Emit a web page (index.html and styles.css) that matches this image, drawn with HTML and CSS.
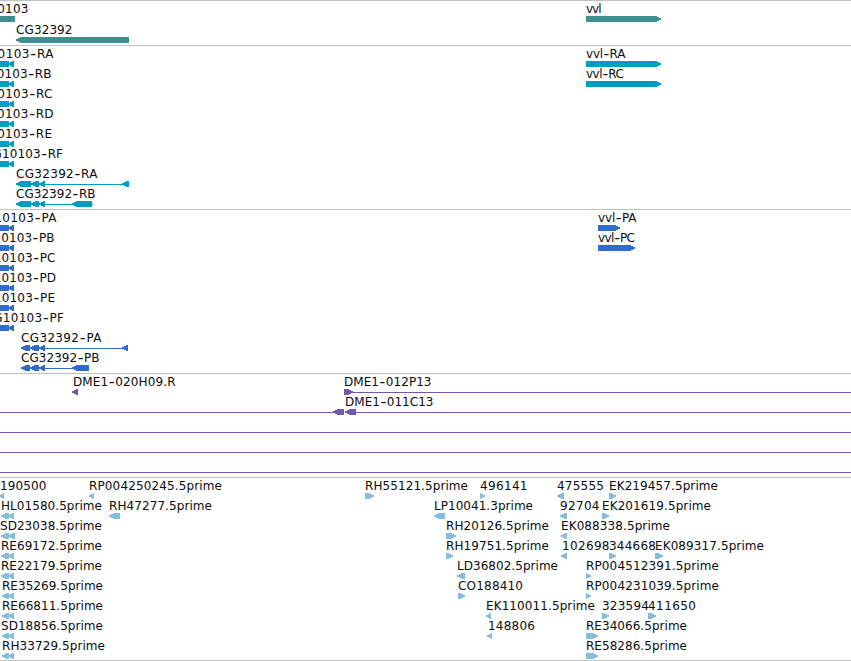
FILE: index.html
```html
<!DOCTYPE html>
<html lang="en">
<head>
<meta charset="utf-8">
<title>Genome tracks</title>
<link rel="stylesheet" href="styles.css">
</head>
<body>
<main class="browser">
  <section class="track genes" id="genes"></section>
  <section class="track transcripts" id="transcripts"></section>
  <section class="track proteins" id="proteins"></section>
  <section class="track clones" id="clones"></section>
  <section class="track ests" id="ests"></section>
</main>
<script src="tracks.js"></script>
</body>
</html>
```
FILE: styles.css
```css
body {
  margin: 0;
  background: #fff;
  overflow: hidden;
}
.browser {
  display: flex;
  flex-direction: column;
  width: 851px;
  height: 661px;
  box-sizing: border-box;
  border-bottom: 1px solid #c0c0c0;
}
.track {
  display: flex;
  flex-direction: column;
  border-top: 1px solid #c0c0c0;
  padding-bottom: 3px;
}
.genes { padding-bottom: 2px; fill: #3e8e94; }
.transcripts { fill: #009dc1; }
.proteins { fill: #316ccc; }
.clones { fill: #7458aa; }
.ests { padding-bottom: 0; fill: #86bddd; }
.row {
  display: block;
  flex: none;
  width: 851px;
  height: 20px;
  overflow: visible;
}
.genes .row { height: 21px; }
.shape { shape-rendering: crispEdges; }
.label {
  font-family: "DejaVu Sans", sans-serif;
  font-size: 12px;
  fill: #0c0c0c;
}
.dash { font-size: 16px; }
```
FILE: tracks.js
```javascript
// Labels: [text, left, right]. Glyphs: [start, end, direction], 0 = plain bar.
// Lines: [start, end].
const near = [[0, 9, 0], [8, 14, -1]];
const tracks = {
  genes: [
    { labels: [['CG10103', -28, 28], ['vvl', 586, 601]], glyphs: [[0, 15, 0], [586, 661, 1]] },
    { labels: [['CG32392', 17, 72]], glyphs: [[16, 129, -1]] }
  ],
  transcripts: [
    { labels: [['CG10103-RA', -28, 53], ['vvl-RA', 586, 625]], glyphs: [...near, [586, 661, 1]] },
    { labels: [['CG10103-RB', -28, 51], ['vvl-RC', 586, 623.5]], glyphs: [...near, [586, 661, 1]] },
    { labels: [['CG10103-RC', -28, 52]], glyphs: near },
    { labels: [['CG10103-RD', -28, 53]], glyphs: near },
    { labels: [['CG10103-RE', -28, 51.5]], glyphs: near },
    { labels: [['CG10103-RF', -15, 62.5]], glyphs: near },
    { labels: [['CG32392-RA', 17, 97]], glyphs: [[16, 31, -1], [31, 39, -1], [39, 45, -1], [122, 129, -1]], lines: [[39, 129]] },
    { labels: [['CG32392-RB', 17, 95]], glyphs: [[16, 31, -1], [31, 39, -1], [39, 45, -1], [72, 92, -1]], lines: [[39, 93]] }
  ],
  proteins: [
    { labels: [['CG10103-PA', -23.3, 56], ['vvl-PA', 598, 636]], glyphs: [...near, [598, 620, 1]] },
    { labels: [['CG10103-PB', -23.3, 54], ['vvl-PC', 598, 634.5]], glyphs: [...near, [598, 635, 1]] },
    { labels: [['CG10103-PC', -23.3, 55]], glyphs: near },
    { labels: [['CG10103-PD', -23.3, 55.5]], glyphs: near },
    { labels: [['CG10103-PE', -23.3, 54.5]], glyphs: near },
    { labels: [['CG10103-PF', -14.5, 63.5]], glyphs: near },
    { labels: [['CG32392-PA', 22, 101]], glyphs: [[21, 30, -1], [30, 39, -1], [39, 45, -1], [122, 128, -1]], lines: [[39, 128]] },
    { labels: [['CG32392-PB', 22, 99]], glyphs: [[21, 30, -1], [30, 39, -1], [39, 45, -1], [72, 89, -1]], lines: [[39, 89]] }
  ],
  clones: [
    { labels: [['DME1-020H09.R', 74, 175], ['DME1-012P13', 345, 431]], glyphs: [[72, 78, -1], [344, 353, 1]], lines: [[344, 851]] },
    { labels: [['DME1-011C13', 346, 433]], glyphs: [[333, 344, -1], [345, 356, -1]], lines: [[0, 344], [345, 851]] },
    { lines: [[0, 851]] },
    { lines: [[0, 851]] },
    { lines: [[0, 851]] }
  ],
  ests: [
    { labels: [['190500', 1, 46], ['RP004250245.5prime', 90, 221.5], ['RH55121.5prime', 366, 467.5], ['496141', 481, 527], ['475555', 558, 603.5], ['EK219457.5prime', 610, 717.5]],
      glyphs: [[-1, 4, -1], [89, 94, -1], [365, 374, 1], [480, 485, 1], [557, 564, -1], [609, 616, 1]] },
    { labels: [['HL01580.5prime', 2, 101.5], ['RH47277.5prime', 110, 211.5], ['LP10041.3prime', 435, 532.5], ['92704', 561, 599], ['EK201619.5prime', 603, 710.5]],
      glyphs: [[1, 9, -1], [8, 14, -1], [109, 120, -1], [434, 445, -1], [560, 567, -1], [602, 609, 1]] },
    { labels: [['SD23038.5prime', 1, 101.5], ['RH20126.5prime', 447, 548.5], ['EK088338.5prime', 562, 669.5]],
      glyphs: [[1, 9, -1], [8, 15, -1], [446, 456, 1], [561, 567, -1]] },
    { labels: [['RE69172.5prime', 2, 101.5], ['RH19751.5prime', 447, 548.5], ['102698', 563, 609], ['344668', 610, 655.5], ['EK089317.5prime', 656, 763.5]],
      glyphs: [[1, 9, -1], [8, 14, -1], [446, 453, 1], [561, 567, -1], [609, 616, 1], [655, 663, 1]] },
    { labels: [['RE22179.5prime', 2, 101.5], ['LD36802.5prime', 458, 557.5], ['RP004512391.5prime', 587, 718.5]],
      glyphs: [[1, 9, -1], [8, 14, -1], [457, 465, -1], [586, 591, 1]] },
    { labels: [['RE35269.5prime', 3, 102.5], ['CO188410', 459, 522.5], ['RP004231039.5prime', 587, 718.5]],
      glyphs: [[2, 9, -1], [8, 14, -1], [458, 465, 1], [586, 591, 1]] },
    { labels: [['RE66811.5prime', 3, 102.5], ['EK110011.5prime', 487, 594.5], ['323594', 603, 648.5], ['411650', 649, 695.5]],
      glyphs: [[2, 9, -1], [8, 14, -1], [486, 491, -1], [602, 609, 1], [648, 656, 1]] },
    { labels: [['SD18856.5prime', 2, 102.5], ['148806', 489, 534.5], ['RE34066.5prime', 587, 686.5]],
      glyphs: [[2, 9, -1], [8, 14, -1], [487, 492, -1], [586, 598, 1]] },
    { labels: [['RH33729.5prime', 3, 104.5], ['RE58286.5prime', 587, 686.5]],
      glyphs: [[2, 9, -1], [8, 14, -1], [586, 598, 1]] }
  ]
};

function glyph([a, b, dir]) {
  const head = Math.min(5, b - a);
  let points;
  if (dir === 0) points = `${a},15 ${b},15 ${b},21 ${a},21`;
  else if (dir < 0) points = `${a},17.4 ${a + 2},16.4 ${a + head},15 ${b},15 ${b},21 ${a + head},21 ${a + 2},19.6 ${a},18.6`;
  else points = `${a},15 ${b - head},15 ${b - 2},16.4 ${b},17.4 ${b},18.6 ${b - 2},19.6 ${b - head},21 ${a},21`;
  return `<polygon class="shape" points="${points}"/>`;
}

function label([text, left, right]) {
  // The larger dash sits at the middle of the capitals.
  const parts = text.split('-');
  const body = parts.length > 1
    ? `${parts[0]}<tspan class="dash" dx="0.5" dy="0.5">-</tspan><tspan dx="0.5" dy="-0.5">${parts[1]}</tspan>`
    : text;
  const x = text.startsWith('vvl') ? left : left - 1;
  return `<text class="label" x="${x}" y="12" textLength="${right - x + 0.5}">${body}</text>`;
}

for (const [id, rows] of Object.entries(tracks)) {
  document.getElementById(id).innerHTML = rows.map(row =>
    `<svg class="row">${
      (row.lines || []).map(([a, b]) => `<rect class="shape" x="${a}" y="18" width="${b - a}" height="1"/>`).join('')
    }${(row.glyphs || []).map(glyph).join('')}${(row.labels || []).map(label).join('')}</svg>`
  ).join('');
}
```
